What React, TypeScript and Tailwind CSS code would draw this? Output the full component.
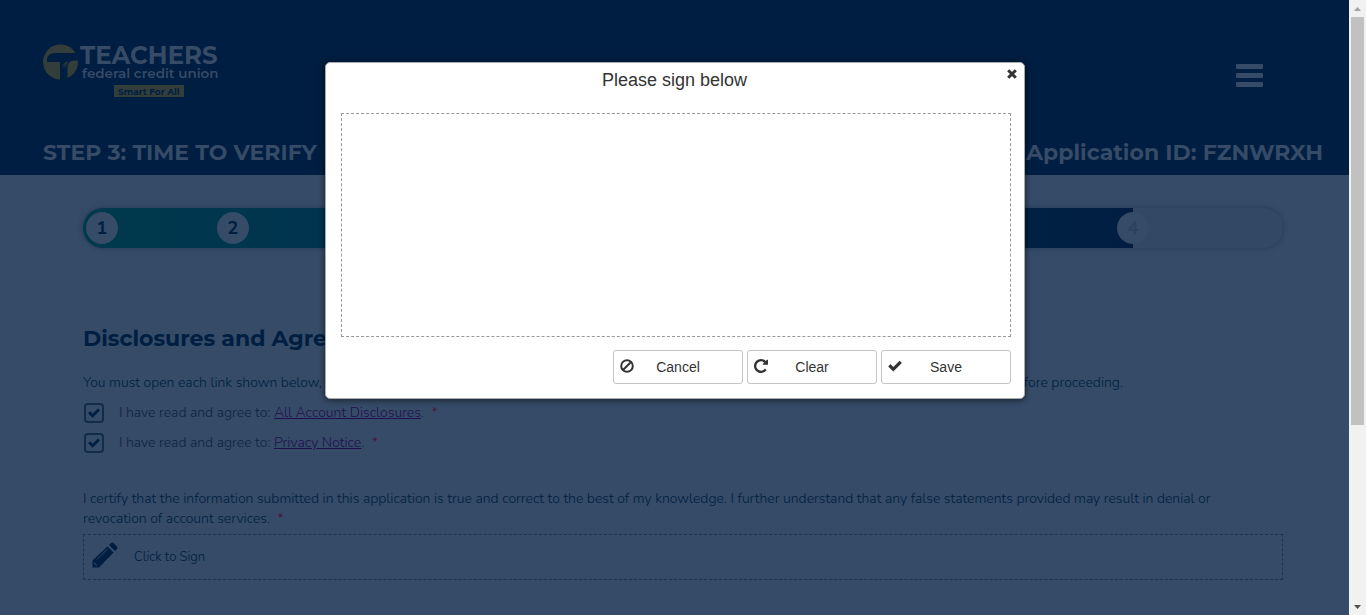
import React, { useState } from "react";

const heading = "font-['Montserrat','Inter',sans-serif]";
const body = "font-['Nunito','Open_Sans',sans-serif]";

function Logo() {
  return (
    <svg width="190" height="66" viewBox="0 0 190 66" role="img" aria-label="Teachers federal credit union">
      <defs>
        <linearGradient id="stem" x1="0" y1="0" x2="0" y2="1">
          <stop offset="0" stopColor="#333e3a" />
          <stop offset="1" stopColor="#001e41" />
        </linearGradient>
      </defs>
      <circle cx="17.500" cy="24" r="17.500" fill="#333e3a" />
      <path d="M4.500 19 Q6.500 15 12 15 H36 V22.500 H30 Q24.500 23.500 24.500 30 V43 H17 V24 H4 Q3.500 21 4.500 19Z" fill="#001e41" />
      <path d="M18.500 31 Q19 25 25 23.500 Q23.500 26 23.500 31Z" fill="url(#stem)" />
      <g fill="#354b67" fontFamily="Montserrat, Inter, sans-serif">
        <text x="37" y="26" fontSize="24.500" fontWeight="700">TEACHERS</text>
        <text x="39" y="40" fontSize="13.500" fontWeight="600">federal credit union</text>
      </g>
      <rect x="71" y="47" width="70" height="12" fill="#333e3a" />
      <text x="75" y="56.500" fontSize="9" fontWeight="700" fill="#001e41" fontFamily="Montserrat, Inter, sans-serif">Smart For All</text>
    </svg>
  );
}

function BanIcon() {
  return (
    <svg width="14" height="14" viewBox="0 0 14 14" fill="none" stroke="currentColor" strokeWidth="2" aria-hidden="true">
      <circle cx="7" cy="7" r="5.800" />
      <path d="M3 11 11 3" />
    </svg>
  );
}

function RepeatIcon() {
  return (
    <svg width="14" height="14" viewBox="0 128 1536 1536" fill="currentColor" aria-hidden="true">
      <path d="M1536 256v448q0 26-19 45t-45 19h-448q-42 0-59-40-17-39 14-69l138-138q-148-137-349-137-104 0-198.500 40.500t-163.500 109.500-109.500 163.500-40.500 198.500 40.500 198.500 109.500 163.500 163.500 109.500 198.500 40.500q119 0 225-52t179-147q7-10 23-12 15 0 25 9l137 138q9 8 9.500 20.500t-7.500 22.500q-109 132-264 204.500t-327 72.500q-156 0-298-61t-245-164-164-245-61-298 61-298 164-245 245-164 298-61q147 0 284.500 55.500t244.500 156.500l130-129q29-31 70-14 39 17 39 59z" />
    </svg>
  );
}

function CheckIcon({ className = "" }: { className?: string }) {
  return (
    <svg width="14" height="14" viewBox="0 0 14 14" fill="currentColor" className={className} aria-hidden="true">
      <path d="M0.200 7.400 2.500 5.100 5.300 7.900 11.600 1.700 13.900 4 5.300 12.500Z" />
    </svg>
  );
}

function CloseIcon() {
  return (
    <svg width="10" height="10" viewBox="0 0 10 10" stroke="currentColor" strokeWidth="3" aria-hidden="true">
      <path d="M1.200 1.200 8.800 8.800M8.800 1.200 1.200 8.800" />
    </svg>
  );
}

function PencilIcon() {
  return (
    <svg width="26" height="26" viewBox="0 0 26 26" fill="#001e41" className="mb-1" aria-hidden="true">
      <path d="M15.500 4.500 21.500 10.500 7 25.500H0.500V18.500Z" />
      <path d="M17 3 19 1Q20.300 0 21.600 1L25 4.400Q26 5.700 25 7L23 9Z" />
      <path d="M5 17.500 15.500 7" stroke="#354b67" strokeWidth="1" />
      <path d="M2.300 20.300 5.500 23.500H3.500V22H2Z" fill="#354b67" />
    </svg>
  );
}

function Required() {
  return <span className="ml-1 text-[#4a1038]">*</span>;
}

function Step({ n, className }: { n: number; className: string }) {
  return (
    <li className={`absolute top-1 flex size-8 items-center justify-center rounded-full bg-[#354b67] text-lg font-bold ${className}`}>
      {n}
    </li>
  );
}

function Agreement({ id, link }: { id: string; link: string }) {
  return (
    <div className="flex h-[30px] items-center pl-px">
      <span className="relative flex size-5">
        <input id={id} type="checkbox" defaultChecked className="peer size-5 appearance-none rounded border-2 border-[#122d4c]" />
        <CheckIcon className="pointer-events-none absolute top-1 left-1 hidden size-3 text-[#001e41] peer-checked:block" />
      </span>
      <label htmlFor={id} className="ml-[15px] text-[#0e2344]">
        I have read and agree to:{" "}
        <a href="#" className="text-[#220f50] underline">{link}</a>. <Required />
      </label>
    </div>
  );
}

function DialogButton({ icon, children, onClick }: { icon: React.ReactNode; children: string; onClick?: () => void }) {
  return (
    <button type="button" onClick={onClick} className="relative h-[34px] w-[130px] rounded-[3px] border border-[#c4c4c4] bg-white text-sm text-[#333]">
      <span className="absolute top-2 left-1.5">{icon}</span>
      {children}
    </button>
  );
}

export default function App() {
  const [open, setOpen] = useState(true);
  return (
    <div className="flex h-screen overflow-hidden bg-[#354b67]">
      <div className="min-w-0 flex-1">
        <header className={`flex h-[175px] flex-col justify-between bg-[#001e41] pr-[26px] pl-[43px] pt-[38px] pb-2 text-[#354b67] ${heading}`}>
          <div className="flex items-start justify-between">
            <Logo />
            <button type="button" aria-label="Menu" className="mt-[26px] mr-[60px] flex w-[27px] flex-col gap-1">
              <span className="h-[5px] w-full rounded-[1px] bg-[#354b67]" />
              <span className="h-[5px] w-full rounded-[1px] bg-[#354b67]" />
              <span className="h-[5px] w-full rounded-[1px] bg-[#354b67]" />
            </button>
          </div>
          <div className="flex justify-between text-[22px] leading-7 font-bold">
            <h1>STEP 3: TIME TO VERIFY</h1>
            <p>Application ID: FZNWRXH</p>
          </div>
        </header>

        <main className={`pr-[66px] pl-[83px] text-sm leading-5 font-light text-[#001e41] ${body}`}>
          <ol className="relative mt-[33px] h-10 rounded-full bg-[#324864] shadow-[0_0_5px_#243a57]">
            <li aria-hidden="true" className="h-10 w-[87.500%] rounded-l-full bg-linear-to-r from-[#00394d] via-[#002d50] to-[#001e41]" />
            <Step n={1} className="left-[3px]" />
            <Step n={2} className="left-[134px]" />
            <Step n={4} className="right-[134px] text-[#2c4260]" />
          </ol>

          <h2 className={`mt-[77px] text-[22px] leading-7 font-bold ${heading}`}>Disclosures and Agreements</h2>
          <div className="mt-5 flex justify-between pr-40">
            <p>You must open each link shown below,</p>
            <p>before proceeding.</p>
          </div>
          <div className="mt-[5px]">
            <Agreement id="accounts" link="All Account Disclosures" />
            <Agreement id="privacy" link="Privacy Notice" />
          </div>
          <p className="mt-[31px] pr-8">
            I certify that the information submitted in this application is true and correct to the best of my knowledge. I further understand that any false statements provided may result in denial or revocation of account services. <Required />
          </p>
          <button type="button" onClick={() => setOpen(true)} className="mt-[5px] flex h-[46px] w-full items-center gap-4 border border-dashed border-[#1c3453] px-2 text-left text-[13px]">
            <PencilIcon />
            Click to Sign
          </button>
        </main>
      </div>

      <div aria-hidden="true" className="flex w-[17px] flex-col items-center bg-[#f1f1f1]">
        <svg width="17" height="17" viewBox="0 0 17 17"><path d="M5 11 8.500 7 12 11Z" fill="#a3a3a3" /></svg>
        <div className="h-[408px] w-[13px] bg-[#c1c1c1]" />
        <svg width="17" height="17" viewBox="0 0 17 17" className="mt-auto"><path d="M5 7 8.500 11 12 7Z" fill="#505050" /></svg>
      </div>

      {open && (
        <div role="dialog" aria-modal="true" aria-labelledby="sign-title" className="absolute top-[62px] left-[325px] flex w-[700px] flex-col rounded-[5px] border border-[#aaa] bg-white pr-[13px] pb-3.5 pl-[15px] font-['Liberation_Sans',sans-serif] text-[#333] shadow-[0_1px_6px_rgba(0,0,0,0.6)]">
          <h2 id="sign-title" className="pt-1 pr-[3px] text-center text-lg leading-[26px]">Please sign below</h2>
          <button type="button" aria-label="Close" onClick={() => setOpen(false)} className="absolute top-1.5 right-[7px]">
            <CloseIcon />
          </button>
          <canvas aria-label="Signature" className="mt-5 h-[224px] w-full border border-dashed border-[#999]" />
          <div className="mt-[13px] flex justify-end gap-1">
            <DialogButton icon={<BanIcon />} onClick={() => setOpen(false)}>Cancel</DialogButton>
            <DialogButton icon={<RepeatIcon />}>Clear</DialogButton>
            <DialogButton icon={<CheckIcon />}>Save</DialogButton>
          </div>
        </div>
      )}
    </div>
  );
}
